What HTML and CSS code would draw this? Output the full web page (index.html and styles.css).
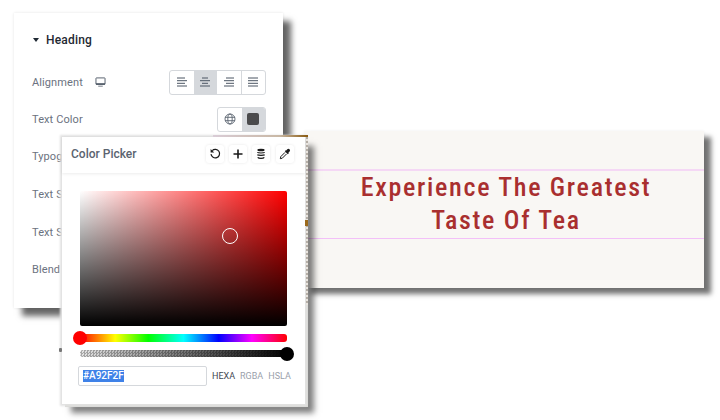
FILE: index.html
```html
<!DOCTYPE html>
<html lang="en">
<head>
<meta charset="utf-8">
<title>Color Picker</title>
<link rel="stylesheet" href="styles.css">
</head>
<body>
<main class="canvas">
  <section class="preview window">
    <div class="guide-band">
      <h1 class="headline">Experience The Greatest<br>Taste Of Tea</h1>
    </div>
  </section>

  <section class="panel window">
    <h2 class="section-title"><span class="caret"></span>Heading</h2>
    <div class="row row-align">
      <span class="label">Alignment</span>
      <svg class="device" viewBox="0 0 12 11"><path d="M1.500 1h9a.5.5 0 0 1 .5.5v6a.5.5 0 0 1-.5.5h-9a.5.5 0 0 1-.5-.5v-6a.5.5 0 0 1 .5-.5z" fill="none" stroke="#4b5563" stroke-width="1"/><path d="M1 7h10v1.500H1zM3.500 9.500h5v1h-5z" fill="#4b5563"/></svg>
      <div class="segments segments-align">
        <span class="seg"><svg class="lines" viewBox="0 0 12 10"><path d="M1 1h8M1 3.700h10M1 6.300h8M1 9h10"/></svg></span>
        <span class="seg seg-on"><svg class="lines" viewBox="0 0 12 10"><path d="M3 1h6M1 3.700h10M3 6.300h6M1 9h10"/></svg></span>
        <span class="seg"><svg class="lines" viewBox="0 0 12 10"><path d="M3 1h8M1 3.700h10M3 6.300h8M1 9h10"/></svg></span>
        <span class="seg seg-split"><svg class="lines" viewBox="0 0 12 10"><path d="M1 1h10M1 3.700h10M1 6.300h10M1 9h10"/></svg></span>
      </div>
    </div>
    <div class="row row-color">
      <span class="label">Text Color</span>
      <div class="segments segments-color">
        <span class="seg seg-globe"><svg class="globe" viewBox="0 0 12 12"><circle cx="6" cy="6" r="5"/><ellipse cx="6" cy="6" rx="2.200" ry="5"/><path d="M1 4.300h10M1 7.700h10"/></svg></span>
        <span class="seg seg-on seg-swatch"><span class="swatch"></span></span>
      </div>
    </div>
    <div class="row"><span class="label">Typog</span></div>
    <div class="row"><span class="label">Text S</span></div>
    <div class="row"><span class="label">Text S</span></div>
    <div class="row"><span class="label">Blend</span></div>
  </section>

  <section class="picker window">
    <header class="picker-head">
      <span class="picker-title">Color Picker</span>
      <div class="tools">
        <span class="tool"><svg viewBox="0 0 12 12"><path class="stroke" d="M3.200 2.600A4.300 4.300 0 1 1 2 6.200"/><path class="fill" d="M1.600 1v3.600h3.600z"/></svg></span>
        <span class="tool"><svg viewBox="0 0 12 12"><path class="stroke wide" d="M6 1.500v9M1.500 6h9"/></svg></span>
        <span class="tool"><svg viewBox="0 0 12 12"><ellipse class="fill" cx="6" cy="2" rx="3.700" ry="1.300"/><path class="stroke" d="M2.300 4.400c1 .8 6.400.8 7.400 0M2.300 6.800c1 .8 6.400.8 7.400 0M2.700 9.300c1 1.300 5.600 1.300 6.600 0"/></svg></span>
        <span class="tool tool-drop"><svg viewBox="0 0 12 12"><path class="fill" d="M7.200 2.600l1.100-1.300a1.400 1.400 0 0 1 2.300 2.100L9.400 4.800l.4.500-1 .9-3-3 .9-1z"/><path class="stroke thin" d="M6 4.400L1.800 8.600 1.300 10.700l2-.5 4.300-4.300"/></svg></span>
      </div>
    </header>
    <div class="picker-body">
      <div class="sat-field"><span class="sat-handle"></span></div>
      <div class="slider hue"><span class="knob knob-red"></span></div>
      <div class="slider alpha"><span class="knob knob-black"></span></div>
      <div class="value-row">
        <div class="hex-input"><span class="hex-selected">#A92F2F</span></div>
        <div class="modes">
          <span class="mode mode-on">HEXA</span>
          <span class="mode">RGBA</span>
          <span class="mode">HSLA</span>
        </div>
      </div>
    </div>
  </section>

  <div class="edge-top"></div>
  <div class="edge-side"></div>
  <div class="edge-chunk"></div>
  <div class="speck"></div>
</main>
</body>
</html>
```
FILE: styles.css
```css
* { box-sizing: border-box; }
html, body { margin: 0; padding: 0; background: #fff; }
body { font-family: Roboto, "Liberation Sans", sans-serif; }

.canvas { position: relative; width: 720px; height: 420px; overflow: hidden; background: #fff; }
.window { position: absolute; }

/* preview */
.preview {
  left: 304px; top: 131px; width: 400px; height: 157px;
  background: #f9f7f4;
  padding-top: 38px;
  box-shadow: 0 0 3px rgba(0,0,0,.06), 7px 6px 5px rgba(0,0,0,.55);
}
.guide-band {
  height: 70px;
  border-top: 2px solid #f5d8f5;
  border-bottom: 1px solid #f3c0f8;
  text-align: center;
  padding: 0 0 0 4px;
}
.headline {
  margin: 0;
  font: 500 26px/33px "Roboto", sans-serif;
  font-stretch: 75%;
  letter-spacing: 1.700px;
  color: #a92f2f;
}

/* settings panel */
.panel {
  left: 14px; top: 13px; width: 269px; height: 295px;
  background: #fff;
  padding: 18px 17px 0 18px;
  box-shadow: 0 0 3px rgba(0,0,0,.1), 8px 8px 6px rgba(0,0,0,.6);
}
.section-title {
  display: flex; align-items: center;
  margin: 0 0 20px;
  height: 18px;
  font: 500 12px/18px Roboto, sans-serif;
  letter-spacing: .2px;
  color: #1f2933;
}
.caret {
  width: 0; height: 0;
  margin: 0 7px 0 1px;
  border: 3.500px solid transparent;
  border-top: 4px solid #1f2933;
  border-bottom: 0;
}
.row { display: flex; align-items: center; height: 37.700px; }
.row-align { height: 26px; margin-bottom: 11px; }
.row-color { height: 26px; margin-bottom: 6px; }
.label { font-size: 11px; color: #6b7280; letter-spacing: .1px; white-space: nowrap; }
.device { width: 11px; height: 10px; margin-left: 12px; }
.segments {
  display: flex;
  margin-left: auto;
  height: 25px;
  border: 1px solid #d5d8dc;
  border-radius: 3px;
  overflow: hidden;
  background: #fff;
}
.seg { display: flex; align-items: center; justify-content: center; flex: 1; }
.seg-on { background: #d5d8dc; }
.seg-split { border-left: 1px solid #d5d8dc; }
.lines { width: 12px; height: 10px; fill: none; stroke: #4b5563; stroke-width: 1; }
.segments-align { width: 97px; }
.segments-color { width: 49px; }
.seg-globe svg { width: 12px; height: 12px; fill: none; stroke: #5b6470; stroke-width: .9; }
.swatch { width: 12px; height: 12px; background: #4b4b4d; border-radius: 2px; }

/* color picker */
.picker {
  left: 62px; top: 137px; width: 243px; height: 267px;
  background: #fff;
  box-shadow: 0 0 2px 2px #e2e2e2, 3px 3px 0 0 #d8d8d4, 9px 9px 6px rgba(0,0,0,.5);
}
.picker-head {
  display: flex; align-items: center; justify-content: space-between;
  height: 36px;
  padding: 0 11px 3px 9px;
  box-shadow: 0 1px 3px rgba(0,0,0,.08);
}
.picker-title { font-size: 12px; font-weight: 500; color: #5b6470; }
.tools { display: flex; gap: 5px; }
.tool {
  display: flex; align-items: center; justify-content: center;
  width: 18px; height: 18px;
  border-radius: 3px;
  box-shadow: 0 0 3px rgba(0,0,0,.1);
}
.tool-drop { margin-left: 1px; }
.tool svg { width: 12px; height: 12px; }
.stroke { fill: none; stroke: #1a1a1a; stroke-width: 1.200; }
.stroke.wide { stroke-width: 1.600; }
.stroke.thin { stroke-width: 1; }
.fill { fill: #1a1a1a; }

.picker-body { padding: 18px 18px 0; }
.sat-field {
  position: relative;
  width: 207px; height: 135px;
  border-radius: 2px;
  background:
    linear-gradient(to top, #000, rgba(0,0,0,0)),
    linear-gradient(to right, #fff, rgba(255,255,255,0)),
    #f00;
}
.sat-handle {
  position: absolute; left: 142px; top: 37px;
  width: 16px; height: 16px;
  border: 1px solid #fff;
  border-radius: 50%;
}
.slider { position: relative; width: 207px; height: 7px; border-radius: 3px; }
.hue {
  margin-top: 8px; height: 8px;
  background: linear-gradient(to right, #f00 0%, #ff0 17%, #0f0 33%, #0ff 50%, #00f 67%, #f0f 83%, #f00 100%);
}
.alpha {
  margin-top: 8px;
  background:
    linear-gradient(to right, rgba(0,0,0,.1), #000),
    repeating-conic-gradient(#bbb 0 25%, #fff 0 50%) 0 0 / 3px 3px;
}
.knob {
  position: absolute; top: 50%;
  width: 14px; height: 14px;
  margin-top: -7px;
  border-radius: 50%;
}
.knob-red { left: -7px; background: #f00; }
.knob-black { right: -7px; background: #000; }

.value-row { display: flex; align-items: center; margin: 9px -5px 0 -2px; }
.hex-input {
  display: flex; align-items: center;
  flex: none;
  width: 129px; height: 20px;
  padding-left: 4px;
  border: 1px solid #d5d8dc;
  border-radius: 2px;
  font-size: 10px;
  font-weight: 500;
  color: #fff;
}
.hex-selected { background: #3f82e8; line-height: 12px; }
.modes { display: flex; flex: none; gap: 5px; margin-left: 5px; font-size: 9px; }
.mode { color: #9aa1ab; }
.mode-on { color: #3f4650; }

/* cropped edge of the page beneath the picker */
.edge-top {
  position: absolute; left: 213px; top: 135px; width: 95px; height: 2px;
  background: linear-gradient(to right, #d9ccd6, #c9b8a5 70%, #8a5a10);
}
.edge-side {
  position: absolute; left: 305.500px; top: 137px; width: 2px; height: 168px;
  background: repeating-linear-gradient(to bottom, #b5aea6 0 2px, #e8e4df 2px 4px);
}
.edge-chunk {
  position: absolute; left: 305px; top: 220px; width: 3px; height: 6px;
  background: #9c6a1c;
}
.speck {
  position: absolute; left: 59px; top: 348px; width: 3px; height: 4px;
  background: #777;
  border-radius: 1px;
}
```
